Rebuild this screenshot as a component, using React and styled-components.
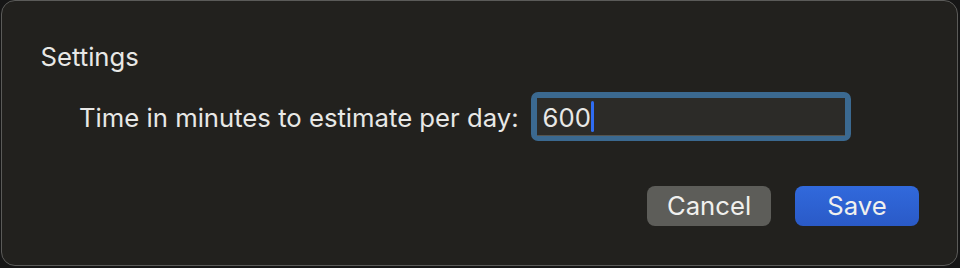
import React from "react";
import styled, { createGlobalStyle } from "styled-components";

const Global = createGlobalStyle`
  html, body {
    margin: 0;
    padding: 0;
    background: #161616;
  }
  body {
    font-family: Inter, "Noto Sans", sans-serif;
    -webkit-font-smoothing: antialiased;
  }
`;

// Sheet panel
const Sheet = styled.div`
  box-sizing: border-box;
  width: 957px;
  height: 266px;
  margin-left: 1px;
  background: #22211e;
  border: 1.5px solid #5b5b59;
  border-radius: 14px;
  padding: 39.5px 38px 0 38.5px;
  display: flex;
  flex-direction: column;
`;

const Title = styled.h2`
  margin: 0;
  font-size: 25.7px;
  font-weight: 400;
  line-height: 32px;
  color: #e8e8e6;
`;

const Row = styled.div`
  display: flex;
  align-items: center;
  gap: 12px;
  margin: 19px 0 0 38.5px;
`;

const Label = styled.label`
  font-size: 25.7px;
  color: #e8e8e6;
  white-space: nowrap;
  margin-top: 3px;
`;

const Field = styled.div`
  box-sizing: border-box;
  width: 320px;
  height: 49px;
  border-radius: 7px;
  background: #3b6990;
  padding: 6px 6px 5px 6px;
  display: flex;
`;

const Inner = styled.div`
  flex: 1;
  background: #2c2b28;
  border-bottom: 1px solid #55544f;
  display: flex;
  align-items: center;
  padding: 3px 0 0 6px;
  font-size: 25.7px;
  color: #e8e8e6;
`;

const Caret = styled.span`
  display: inline-block;
  width: 3.5px;
  height: 31px;
  margin: -3px 0 0 0;
  border-radius: 1.5px;
  background: #2f6cf2;
`;

const Actions = styled.div`
  display: flex;
  justify-content: flex-end;
  gap: 24px;
  margin-top: 45px;
`;

const Button = styled.button`
  width: 124px;
  height: 40px;
  border: none;
  border-radius: 8px;
  font-family: inherit;
  font-size: 25.7px;
  color: #f0f0ee;
  background: ${(p) =>
    p.$primary ? "linear-gradient(#3169dc, #2a5ac7)" : "#5d5d59"};
  padding: 0;
`;

export default function App() {
  return (
    <>
      <Global />
      <Sheet>
        <Title>Settings</Title>
        <Row>
          <Label>Time in minutes to estimate per day:</Label>
          <Field>
            <Inner>
              600
              <Caret />
            </Inner>
          </Field>
        </Row>
        <Actions>
          <Button>Cancel</Button>
          <Button $primary>Save</Button>
        </Actions>
      </Sheet>
    </>
  );
}
